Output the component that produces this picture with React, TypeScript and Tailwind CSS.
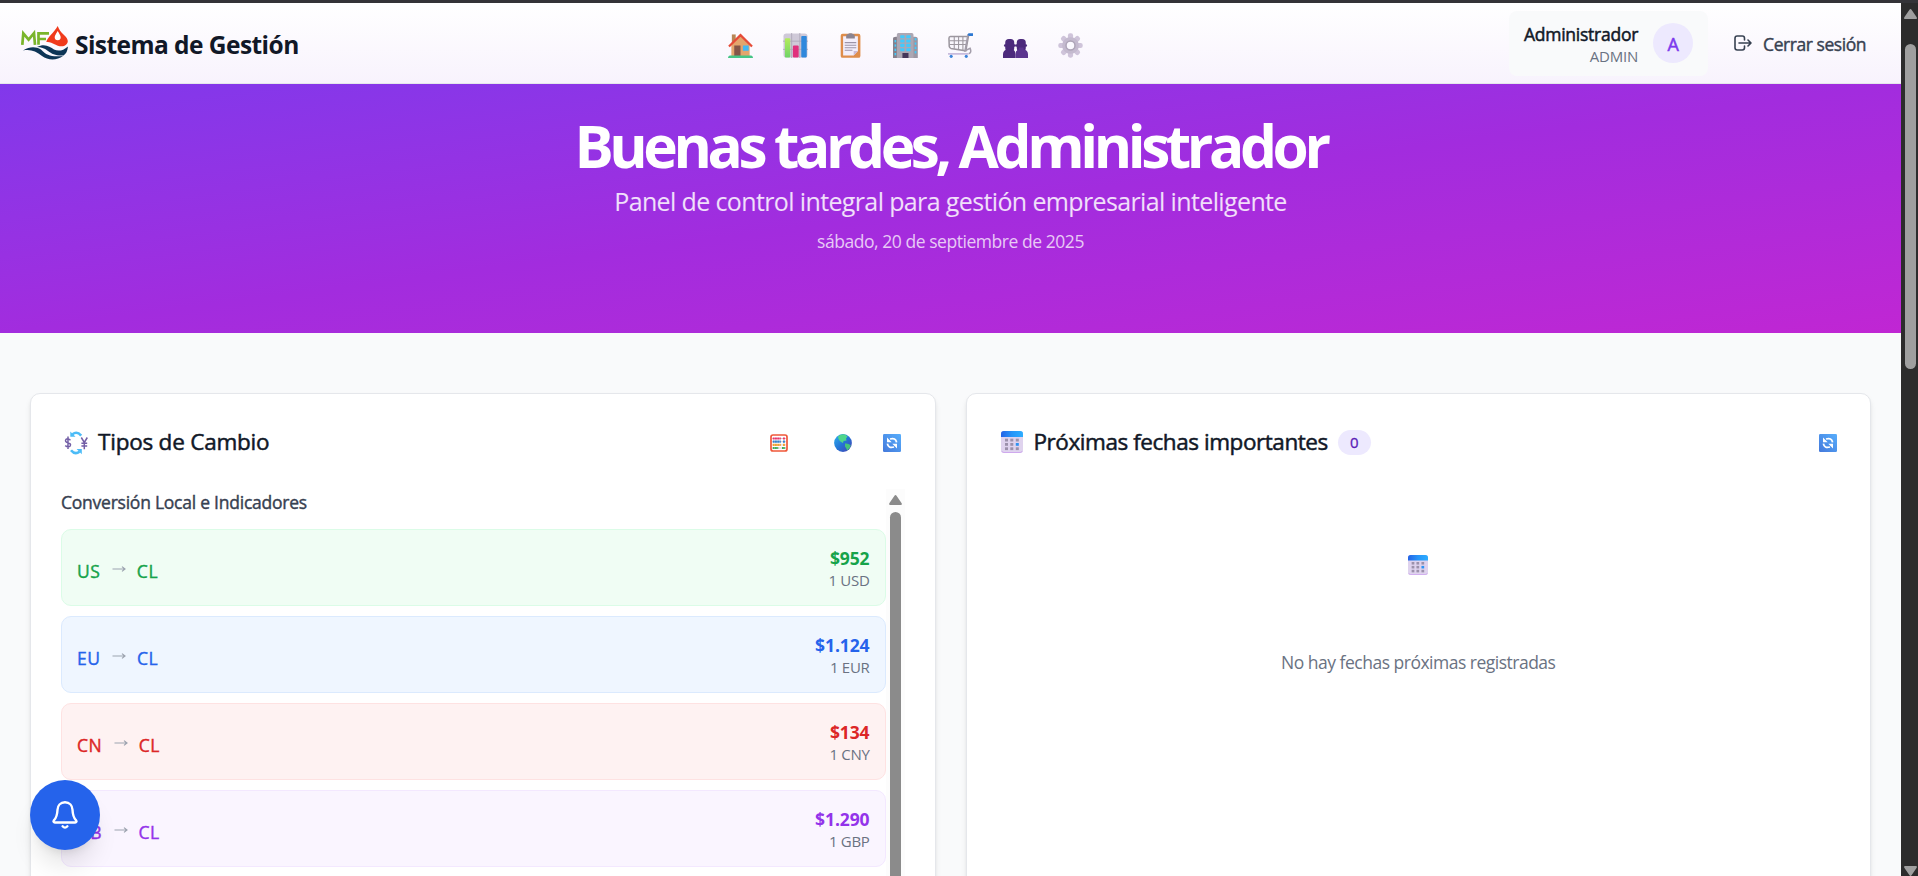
import React from "react";

type IconProps = { className?: string };

function Logo() {
  return (
    <svg viewBox="0 0 48 34" className="h-[34px] w-12 shrink-0">
      <path d="M2.300 18.800 3.300 7.400 8.600 13.600 14 7.200 15 18.800" fill="none" stroke="#7ab52b" strokeWidth="2.700" />
      <path d="M18.500 18.800V7.400H29M18.500 13H26" fill="none" stroke="#7ab52b" strokeWidth="2.700" />
      <path d="M37.700 0C34.500 6 26.800 12 26.300 16C33 15 37 22 44 20C50 17 48 12.500 44 9C40.500 6 39.200 3.500 37.700 0Z" fill="#f03a1c" />
      <path d="M37.700 5c-1.800 3.200-3 4.600-3 6.300a3 3 0 0 0 6 0c0-1.700-1.200-3.100-3-6.300Z" fill="#fff" />
      <path d="M3 24.500C10 20 16 20.500 21 23.500C27 30 32 31 43 30C37 34.500 28 34.500 22 30C16 25 10 23 3 24.500Z" fill="#0d3556" />
      <path d="M17 21C25 17 30 21 34 23.500C38 25.500 43 25 48 20.500C47.500 25 46 28 43.500 29.500C36 30 32 28 28 25C24 22 21 21 17 21Z" fill="#0d3556" />
    </svg>
  );
}

function House({ className }: IconProps) {
  return (
    <svg viewBox="0 0 26 26" className={className}>
      <rect x="4" y="1.500" width="4" height="9" fill="#b88655" />
      <path d="M3.500 12 13 3l9.500 9v12h-19Z" fill="#e3a56d" />
      <path d="M1 14 13 2.200l12 11.800" fill="none" stroke="#e64b38" strokeWidth="2.300" />
      <rect x="6.500" y="13" width="6.500" height="11" fill="#845548" />
      <rect x="15.500" y="13" width="6" height="5.500" fill="#43b8f4" />
      <path d="M0 26c0-2 1.500-2.500 3-2.500h20c1.500 0 3 .5 3 2.500Z" fill="#46c586" />
    </svg>
  );
}

function BarChart({ className }: IconProps) {
  return (
    <svg viewBox="0 0 26 26" className={className}>
      <defs>
        <linearGradient id="bar-green" x1="0" y1="0" x2="0" y2="1">
          <stop offset="0" stopColor="#b4ec5c" />
          <stop offset="1" stopColor="#6fd468" />
        </linearGradient>
      </defs>
      <rect x=".5" y=".5" width="25" height="25" rx="3" fill="#cfc9d8" />
      <path d="M9 0v26M17.500 0v26M0 8.500h26M0 17h26" stroke="#aea8b8" strokeWidth=".9" />
      <rect x="2" y="5.500" width="5.500" height="20" rx="1" fill="url(#bar-green)" />
      <rect x="10.300" y="13" width="6" height="12.500" rx="1" fill="#e0307c" />
      <rect x="19" y="3" width="5.700" height="22.500" rx="1" fill="#2f88dc" />
    </svg>
  );
}

function Clipboard({ className }: IconProps) {
  return (
    <svg viewBox="0 0 26 26" className={className}>
      <rect x="2.800" y=".8" width="20.500" height="25" rx="2" fill="#de8d4b" />
      <path d="M5.300 3.500h15.400v15.300l-4.400 4.700h-11Z" fill="#f3eefb" />
      <path d="M20.700 18.800h-4.400v4.700Z" fill="#c9b9d6" />
      <path d="M8.500 5.800V3c0-1.200.8-1.700 2-1.700C11-.2 15-.2 15.500 1.300c1.200 0 2 .5 2 1.700v2.800Z" fill="#8b8490" />
      <path d="M7 10h12M7 12.700h12M7 15.400h12M7 18h8" stroke="#9c94a8" strokeWidth="1.100" />
    </svg>
  );
}

function Office({ className }: IconProps) {
  return (
    <svg viewBox="0 0 26 26" className={className}>
      <path d="M0 6q0-2 3-2h4v22H0Z" fill="#85808c" />
      <path d="M19 4h4q2.800 0 2.800 2v20H19Z" fill="#9c97a3" />
      <path d="M5.500 0h14q1.800 0 1.800 1.800v24.200H4V1.800Q4 0 5.500 0Z" fill="#aca7b3" />
      {[2.3, 6.8, 11.3, 15.8].map((y) => (
        <g key={y} fill="#43c9fb">
          <rect x="7.500" y={y} width="4.500" height="3.200" rx=".6" />
          <rect x="13.800" y={y} width="4.500" height="3.200" rx=".6" />
          <rect x="1.600" y={y + 5} width="1.700" height="2.400" />
          <rect x="22.500" y={y + 3} width="1.800" height="2.400" />
        </g>
      ))}
      <rect x="9.800" y="20.800" width="6.300" height="5.200" fill="#45375a" />
    </svg>
  );
}

function Cart({ className }: IconProps) {
  return (
    <svg viewBox="0 0 26 26" className={className}>
      <path d="M1 5.500Q1 3.700 2.500 3.700h18.700l-2.700 14.800-15.500-2.500Q1.500 15.500 1.300 14Z" fill="#f8f6fc" stroke="#9c979f" strokeWidth="1.600" />
      <path d="M1.500 8h18.500M1.500 12h18M6.500 4v12.500M11 4v13M15.500 4v14" stroke="#9c979f" strokeWidth="1.100" />
      <path d="m23.500 1.500-2.800.5-3 16.500 5.300-2.500q2 4.500-1.500 5.500" fill="none" stroke="#a49eab" strokeWidth="1.600" />
      <path d="M.5 21.700h20" stroke="#c8bbdc" strokeWidth="1.900" strokeLinecap="round" />
      <path d="M22 1.600h3.500" stroke="#2c78d2" strokeWidth="2.800" strokeLinecap="round" />
      <circle cx="3.300" cy="24.300" r="1.600" fill="#3a83da" />
      <circle cx="19" cy="24.300" r="1.600" fill="#3a83da" />
    </svg>
  );
}

function People({ className }: IconProps) {
  return (
    <svg viewBox="0 0 26 26" className={className}>
      <g fill="#4c2a7c">
        <rect x="2.300" y="6.300" width="9.400" height="13" rx="3.800" />
        <rect x="14.300" y="6.300" width="9.400" height="13" rx="3.800" />
        <path d="M0 26v-4q0-4 4.500-4.800V15h5v2.200Q13 18 13 22v4Z" />
        <path d="M13 26v-4q0-4 3.500-4.800V15h5v2.200q4.500.8 4.500 4.800v4Z" fill="#5b358e" />
      </g>
      <circle cx="2.300" cy="13" r="1.300" fill="#4c2a7c" />
      <circle cx="11.900" cy="13" r="1.300" fill="#4c2a7c" />
      <circle cx="14.100" cy="13" r="1.300" fill="#4c2a7c" />
      <circle cx="23.700" cy="13" r="1.300" fill="#4c2a7c" />
    </svg>
  );
}

function Gear({ className }: IconProps) {
  return (
    <svg viewBox="0 0 26 26" className={className}>
      {[0, 45, 90, 135, 180, 225, 270, 315].map((angle) => (
        <rect key={angle} x="10.300" y=".3" width="5.400" height="8" rx="2.200" fill="#cfc4da" transform={`rotate(${angle} 13 13)`} />
      ))}
      <circle cx="13" cy="13" r="6.500" fill="#fbf9ff" stroke="#c4bacf" strokeWidth="4.400" />
      <circle cx="13" cy="13" r="4.700" fill="none" stroke="#aea5b8" strokeWidth="1.500" />
    </svg>
  );
}

function Exchange({ className }: IconProps) {
  return (
    <svg viewBox="0 0 24 24" className={className}>
      <g fill="none" stroke="#4cbcf7" strokeWidth="2.600">
        <path d="M17.200 4.700Q13-.3 8.500 3.200" />
        <path d="M7 19.300q4 5 8.500 1.500" />
      </g>
      <path d="M6.300.5v5.200h5.200ZM17.800 23.300v-5.200h-5.200Z" fill="#4cbcf7" />
      <g fill="none" stroke="#735fa6" strokeWidth="1.500">
        <path d="M6.500 9.300q-2.500-2.300-4.500-1-1.600 2.400 1.900 3.400 3.600 1 2.300 3.300-2 1.900-5-.3M4 5.500v12.500" />
        <path d="m17.300 6.500 3 5 3-5M20.300 11.500v6.700M17.400 12.300h5.800M17.400 15.100h5.800" />
      </g>
    </svg>
  );
}

function Abacus({ className }: IconProps) {
  return (
    <svg viewBox="0 0 18 18" className={className}>
      <rect x="1" y="1" width="16" height="16" rx="2" fill="#fff" stroke="#f0583a" strokeWidth="1.700" />
      <path d="M2 4.500h14M2 7.700h14M2 10.900h14M2 14h14" stroke="#d6b9be" strokeWidth=".8" />
      <g strokeWidth="2.200" strokeDasharray="1.900 .3">
        <path d="M2.800 4.500h8M13 4.500h2.200" stroke="#e8336a" />
        <path d="M2.800 7.700h8M13 7.700h2.200" stroke="#3282cf" />
        <path d="M2.800 10.900h8M13 10.900h2.200" stroke="#f0a333" />
        <path d="M2.800 14h5.500M12 14h3.200" stroke="#3fae5e" />
      </g>
    </svg>
  );
}

function Globe({ className }: IconProps) {
  return (
    <svg viewBox="0 0 18 18" className={className}>
      <defs>
        <linearGradient id="ocean" x1="0" y1="0" x2="1" y2="1">
          <stop offset="0" stopColor="#2fb0ee" />
          <stop offset=".5" stopColor="#2375d6" />
          <stop offset="1" stopColor="#4a3fb0" />
        </linearGradient>
      </defs>
      <circle cx="9" cy="9" r="8.900" fill="url(#ocean)" />
      <path d="M4 2.500Q7.500-.5 11.500.7L13.500 2.500l-1.500 2 .5 2-3 .5L9 9 6 7.200 4.500 5Z" fill="#4fd68b" />
      <path d="M11 9.500q3-.5 5.800 1.700-.5 3-3.600 5.200-.9-2.400-2.200-4Z" fill="#45c47c" />
    </svg>
  );
}

function Refresh({ className }: IconProps) {
  return (
    <svg viewBox="0 0 18 18" className={className}>
      <defs>
        <linearGradient id="button-blue" x1="0" y1="1" x2="1" y2="0">
          <stop offset="0" stopColor="#4479db" />
          <stop offset="1" stopColor="#57aefc" />
        </linearGradient>
      </defs>
      <rect width="18" height="18" rx="1.200" fill="url(#button-blue)" />
      <g fill="none" stroke="#fff" strokeWidth="1.800">
        <path d="M13.600 8.300Q12.700 3.300 7 5M4.400 9.700q.9 5 6.600 3.300" />
      </g>
      <path d="M4 3.500v4.700h4.700ZM14 14.500V9.800H9.300Z" fill="#fff" />
    </svg>
  );
}

function Calendar({ className }: IconProps) {
  return (
    <svg viewBox="0 0 22 22" className={className}>
      <defs>
        <linearGradient id="calendar-top">
          <stop offset="0" stopColor="#2563e6" />
          <stop offset=".5" stopColor="#2795f8" />
          <stop offset="1" stopColor="#2cadff" />
        </linearGradient>
      </defs>
      <rect width="22" height="22" rx="2.800" fill="#dfd3ee" />
      <path d="M0 6V2.800Q0 0 2.800 0h16.400Q22 0 22 2.800V6Z" fill="url(#calendar-top)" />
      <path d="M.8 20q.6 1.500 2.200 1.500h16q1.600 0 2.200-1.500" fill="none" stroke="#cfa9ee" strokeWidth="1" />
      {[7.7, 12, 16.3].map((y) =>
        [4, 9.3, 14.8].map((x) => (
          <rect key={`${x}-${y}`} x={x} y={y} width="3" height="2.800" fill={x === 14.8 && y === 12 ? "#2f92f2" : "#9c91ab"} />
        )),
      )}
    </svg>
  );
}

function Logout({ className }: IconProps) {
  return (
    <svg viewBox="0 0 18 17" className={className} fill="none" stroke="#374151" strokeWidth="1.600" strokeLinecap="round" strokeLinejoin="round">
      <path d="M10.500 5V3.200Q10.500 1 8.300 1H3.200Q1 1 1 3.200v9.600Q1 15 3.200 15h5.100q2.200 0 2.200-2.200V11" />
      <path d="M5 8h12M14 5l3 3-3 3" />
    </svg>
  );
}

function Bell({ className }: IconProps) {
  return (
    <svg viewBox="0 0 26 30" className={className} fill="none" stroke="#fff" strokeWidth="2.400" strokeLinecap="round" strokeLinejoin="round">
      <path d="M13 2.200c-4.700 0-7.300 3.500-7.500 7.500-.2 5-1 8-3.600 10.600-.8 1.200-.3 2.200 1 2.200h20.200c1.300 0 1.800-1 1-2.200-2.600-2.600-3.400-5.600-3.600-10.600-.2-4-2.800-7.500-7.500-7.500Z" />
      <path d="M10.600 26.300q2.400 2.600 4.800 0" />
    </svg>
  );
}

function RowArrow() {
  return (
    <svg viewBox="0 0 14 6" className="mb-1 h-1.5 w-3.5" fill="none" stroke="#9ca3af" strokeWidth="1.200">
      <path d="M.5 3h12.500M10 .6 13 3l-3 2.400" />
    </svg>
  );
}

const navigation = [House, BarChart, Clipboard, Office, Cart, People, Gear];

const rates = [
  { from: "US", value: "$952", unit: "1 USD", box: "border-green-100 bg-[#f0fdf4]", text: "text-[#16a34a]" },
  { from: "EU", value: "$1.124", unit: "1 EUR", box: "border-[#dbeafe] bg-[#eff6ff]", text: "text-[#2563eb]" },
  { from: "CN", value: "$134", unit: "1 CNY", box: "border-[#fee2e2] bg-[#fef2f2]", text: "text-[#dc2626]" },
  { from: "GB", value: "$1.290", unit: "1 GBP", box: "border-[#f3e8ff] bg-[#faf5ff]", text: "text-[#9333ea]" },
];

function Header() {
  return (
    <header className="grid h-[81px] shrink-0 grid-cols-[708px_auto_1fr] items-center border-b border-gray-200 bg-linear-to-b from-white to-[#f8f3fd] pr-[35px] pl-5">
      <div className="flex items-center gap-[7px]">
        <Logo />
        <span className="pt-[5px] text-[24.500px] font-bold tracking-[-0.550px] text-[#111827]">Sistema de Gestión</span>
      </div>
      <nav className="flex items-center gap-[30px] pt-1">
        {navigation.map((Icon, index) => (
          <Icon key={index} className="h-[25px] w-[25px]" />
        ))}
      </nav>
      <div className="flex items-center justify-end gap-[26px]">
        <div className="flex h-[65px] w-[199px] items-center justify-end gap-[15px] rounded-lg bg-[#f9fafb] pr-[15px]">
          <div className="pt-[3px] text-right">
            <div className="text-[17.500px] leading-[22px] font-normal tracking-[-0.250px] text-[#111827] [-webkit-text-stroke:0.5px]">Administrador</div>
            <div className="text-[15px] leading-[22px] tracking-[-0.200px] text-gray-500">ADMIN</div>
          </div>
          <div className="flex size-10 items-center justify-center rounded-full bg-[#ede9fe] pt-0.5 text-[18px] font-normal text-[#7c3aed] [-webkit-text-stroke:0.5px]">A</div>
        </div>
        <button className="flex items-center gap-[11px] text-[17.500px] font-normal tracking-[-0.450px] text-[#374151] [-webkit-text-stroke:0.4px]">
          <Logout className="h-[17px] w-[18px]" />
          <span className="pt-[3px]">Cerrar sesión</span>
        </button>
      </div>
    </header>
  );
}

function Hero() {
  return (
    <section className="flex h-[249px] shrink-0 flex-col items-center bg-linear-to-br from-[#8138eb] via-[#a22cde] to-[#c026d3] pt-[24px] text-white">
      <h1 className="text-[58.500px] leading-[75px] font-bold tracking-[-4.400px]">Buenas tardes, Administrador</h1>
      <p className="mt-px text-[25px] leading-[34px] tracking-[-0.630px] text-white/85">Panel de control integral para gestión empresarial inteligente</p>
      <p className="mt-[9px] text-[17.500px] leading-[28px] tracking-[-0.450px] text-white/75">sábado, 20 de septiembre de 2025</p>
    </section>
  );
}

function RatesCard() {
  return (
    <section className="h-[600px] rounded-[10px] border border-gray-200 bg-white px-[30px] pt-9 shadow-md">
      <div className="flex h-[26px] items-center justify-between">
        <div className="flex items-center gap-[10px] pl-[3px]">
          <Exchange className="size-6" />
          <h2 className="pb-[3px] text-[22.500px] font-normal tracking-[-0.220px] text-[#111827] [-webkit-text-stroke:0.5px]">Tipos de Cambio</h2>
        </div>
        <div className="flex items-center pr-1">
          <Abacus className="mr-[46px] size-[18px]" />
          <Globe className="mr-[31px] size-[18px]" />
          <Refresh className="size-[18px]" />
        </div>
      </div>
      <div className="mt-[33px] flex">
        <div className="w-[825px]">
          <h3 className="mb-2.5 h-[30px] text-[17.500px] leading-[27px] font-normal tracking-[-0.240px] text-[#374151] [-webkit-text-stroke:0.4px]">Conversión Local e Indicadores</h3>
          <div className="flex flex-col gap-2.5">
            {rates.map((rate) => (
              <div key={rate.from} className={`flex h-[77px] items-center justify-between rounded-[10px] border px-[15px] ${rate.box}`}>
                <div className={`flex items-center pt-[7px] text-[17.500px] font-normal tracking-[0.500px] [-webkit-text-stroke:0.4px] ${rate.text}`}>
                  <span>{rate.from}</span>
                  <span className="mr-[11px] ml-[11.500px]">
                    <RowArrow />
                  </span>
                  <span>CL</span>
                </div>
                <div className="pt-[2px] text-right">
                  <div className={`text-[17.500px] leading-[22px] font-bold tracking-[-0.100px] ${rate.text}`}>{rate.value}</div>
                  <div className="text-[15px] leading-[22px] tracking-[-0.300px] text-gray-500">{rate.unit}</div>
                </div>
              </div>
            ))}
          </div>
        </div>
        <div className="flex h-[600px] w-[19px] flex-col items-center bg-[#fcfcfc] pt-[6px]">
          <svg viewBox="0 0 13 10" className="h-2.5 w-[13px]" fill="#8b8b8b">
            <path d="M5.300 1q1.200-1.800 2.400 0l5 7.200Q13.300 10 12 10H1Q-.3 10 .3 8.200Z" />
          </svg>
          <div className="mt-[7px] h-[580px] w-[11px] rounded-full bg-[#8b8b8b]" />
        </div>
      </div>
    </section>
  );
}

function DatesCard() {
  return (
    <section className="h-[600px] rounded-[10px] border border-gray-200 bg-white px-[33px] pt-9 shadow-md">
      <div className="flex h-[26px] items-center">
        <Calendar className="mb-0.5 ml-px size-[22px]" />
        <h2 className="ml-[11px] pb-[3px] text-[22.500px] font-normal tracking-[-0.440px] text-[#111827] [-webkit-text-stroke:0.5px]">Próximas fechas importantes</h2>
        <span className="mb-0.5 ml-2.5 flex h-[25px] w-[33px] items-center justify-center rounded-full bg-[#ede9fe] pt-px text-[15px] font-normal text-[#5b21b6] [-webkit-text-stroke:0.3px]">0</span>
        <Refresh className="ml-auto size-[18px]" />
      </div>
      <div className="flex flex-col items-center pt-[99px]">
        <Calendar className="size-5" />
        <p className="mt-[73px] text-[17.500px] leading-[28px] tracking-[-0.500px] text-gray-500">No hay fechas próximas registradas</p>
      </div>
    </section>
  );
}

function PageScrollbar() {
  return (
    <div className="flex w-[17px] flex-col items-center bg-[#2c2c2c] pt-1.5">
      <svg viewBox="0 0 13 10" className="ml-0.5 h-2.5 w-[13px]" fill="#9f9f9f">
        <path d="M5.300 1q1.200-1.800 2.400 0l5 7.200Q13.300 10 12 10H1Q-.3 10 .3 8.200Z" />
      </svg>
      <div className="mt-[25px] ml-0.5 h-[325px] w-[11px] rounded-full bg-[#9f9f9f]" />
      <svg viewBox="0 0 13 10" className="mt-auto ml-0.5 h-2.5 w-[13px] rotate-180" fill="#9f9f9f">
        <path d="M5.300 1q1.200-1.800 2.400 0l5 7.200Q13.300 10 12 10H1Q-.3 10 .3 8.200Z" />
      </svg>
    </div>
  );
}

export default function App() {
  return (
    <div className="relative flex h-[876px] w-[1918px] flex-col overflow-hidden bg-[#f9fafb] font-['Open_Sans','Noto_Sans',sans-serif]">
      <div className="h-[3px] shrink-0 bg-[#343438]" />
      <div className="flex min-h-0 flex-1">
        <div className="flex w-[1901px] flex-col overflow-hidden">
          <Header />
          <Hero />
          <main className="grid shrink-0 grid-cols-2 gap-[30px] px-[30px] pt-[60px]">
            <RatesCard />
            <DatesCard />
          </main>
        </div>
        <PageScrollbar />
      </div>
      <button className="absolute top-[780px] left-[30px] flex size-[70px] items-center justify-center rounded-full bg-[#2563eb] shadow-xl">
        <Bell className="h-[30px] w-[26px]" />
      </button>
    </div>
  );
}
